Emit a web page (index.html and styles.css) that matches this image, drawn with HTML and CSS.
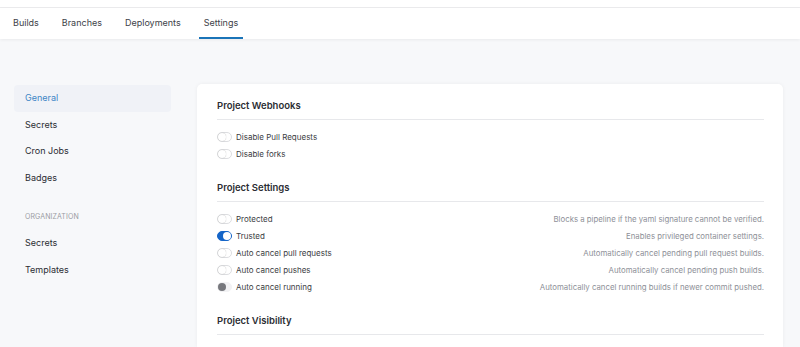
FILE: index.html
```html
<!DOCTYPE html>
<html>
<head lang="en">
    <meta charset="UTF-8">
    <title>Settings</title>
    <link rel="stylesheet" href="styles.css">
</head>
<body>
<div class="top-strip"></div>
<div class="tabs">
    <a href="javascript:void(0)" class="tab">Builds</a>
    <a href="javascript:void(0)" class="tab">Branches</a>
    <a href="javascript:void(0)" class="tab">Deployments</a>
    <a href="javascript:void(0)" class="tab tab-active">Settings</a>
</div>
<div class="page">
    <div class="side-nav">
        <a href="javascript:void(0)" class="side-item side-active">General</a>
        <a href="javascript:void(0)" class="side-item">Secrets</a>
        <a href="javascript:void(0)" class="side-item">Cron Jobs</a>
        <a href="javascript:void(0)" class="side-item">Badges</a>
        <div class="side-label">ORGANIZATION</div>
        <a href="javascript:void(0)" class="side-item">Secrets</a>
        <a href="javascript:void(0)" class="side-item">Templates</a>
    </div>
    <div class="card">
        <div class="section">
            <h3 class="section-title">Project Webhooks</h3>
            <div class="rows">
                <div class="row"><span class="toggle"></span><span class="row-label">Disable Pull Requests</span></div>
                <div class="row"><span class="toggle"></span><span class="row-label">Disable forks</span></div>
            </div>
        </div>
        <div class="section">
            <h3 class="section-title">Project Settings</h3>
            <div class="rows">
                <div class="row"><span class="toggle"></span><span class="row-label">Protected</span><span class="row-desc">Blocks a pipeline if the yaml signature cannot be verified.</span></div>
                <div class="row"><span class="toggle toggle-on"></span><span class="row-label">Trusted</span><span class="row-desc">Enables privileged container settings.</span></div>
                <div class="row"><span class="toggle"></span><span class="row-label">Auto cancel pull requests</span><span class="row-desc">Automatically cancel pending pull request builds.</span></div>
                <div class="row"><span class="toggle"></span><span class="row-label">Auto cancel pushes</span><span class="row-desc">Automatically cancel pending push builds.</span></div>
                <div class="row"><span class="toggle toggle-disabled"></span><span class="row-label">Auto cancel running</span><span class="row-desc">Automatically cancel running builds if newer commit pushed.</span></div>
            </div>
        </div>
        <div class="section">
            <h3 class="section-title">Project Visibility</h3>
        </div>
    </div>
</div>
</body>
</html>
```

FILE: styles.css
```css
*{
    margin: 0;
    padding: 0;
    box-sizing: border-box;
}
a{
    text-decoration: none;
    color: inherit;
}
body{
    font-family: Inter, "Noto Sans", sans-serif;
    background: #f7f8fa;
    color: #2b2d33;
    height: 347px;
    overflow: hidden;
}
.top-strip{
    height: 8px;
    background: #fff;
    border-bottom: 1px solid #ececee;
}
.tabs{
    display: flex;
    gap: 13px;
    height: 31px;
    padding: 0 0 0 8px;
    background: #fff;
    box-shadow: 0 1px 3px rgba(0, 0, 0, 0.06);
    position: relative;
}
.tab{
    display: flex;
    align-items: center;
    padding: 0 5px;
    font-size: 9px;
    color: #404248;
    border-bottom: 2px solid transparent;
}
.tab-active{
    border-bottom-color: #1a74b8;
}
.page{
    display: flex;
    padding: 45px 17px 0 14px;
    gap: 26px;
}
.side-nav{
    width: 157px;
    display: flex;
    flex-direction: column;
    padding-top: 1px;
}
.side-item{
    height: 26.5px;
    line-height: 26.5px;
    padding-left: 11px;
    font-size: 9px;
    color: #2b2d33;
    border-radius: 4px;
}
.side-active{
    color: #3d86c6;
    background: #f0f2f7;
}
.side-label{
    margin-top: 13px;
    height: 26px;
    line-height: 26px;
    padding-left: 11px;
    font-size: 7px;
    letter-spacing: 0.1px;
    color: #9a9ca3;
}
.card{
    flex: 1;
    background: #fff;
    border-radius: 5px 5px 0 0;
    box-shadow: 0 0 4px rgba(0, 0, 0, 0.05);
    padding: 16px 19px 0 20px;
    height: 263px;
    overflow: hidden;
}
.section{
    margin-bottom: 20px;
}
.section-title{
    font-size: 9.5px;
    line-height: 12px;
    font-weight: 600;
    color: #2b2d33;
    padding-bottom: 7px;
    border-bottom: 1px solid #e7e8eb;
}
.rows{
    padding-top: 8px;
}
.row{
    display: flex;
    align-items: center;
    height: 17px;
    font-size: 8px;
}
.row-label{
    color: #3a3c42;
}
.row-desc{
    margin-left: auto;
    font-size: 7.8px;
    color: #8e9098;
}
.toggle{
    width: 15px;
    height: 10px;
    border-radius: 5px;
    border: 1px solid #dcdde0;
    background: #fff;
    margin-right: 4px;
    position: relative;
}
.toggle::after{
    content: "";
    position: absolute;
    left: 0;
    top: 0;
    width: 8px;
    height: 8px;
    border-radius: 50%;
    background: #fff;
    box-shadow: 0 0 1px rgba(0, 0, 0, 0.35);
}
.toggle-on{
    background: #1565c8;
    border-color: #1565c8;
}
.toggle-on::after{
    left: 5px;
    box-shadow: none;
}
.toggle-disabled{
    background: #f2f2f4;
    border-color: #f2f2f4;
}
.toggle-disabled::after{
    background: #77787d;
    box-shadow: none;
}
```
